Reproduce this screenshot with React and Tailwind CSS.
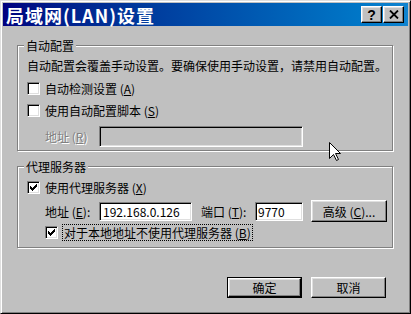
import React from "react";

function Check({ checked }) {
  return (
    <span className="w-[13px] h-[13px] shrink-0 bg-white border border-t-[#808080] border-l-[#808080] border-r-white border-b-white shadow-[inset_1px_1px_0_#000,inset_-1px_-1px_0_#dfdfdf] flex items-center justify-center">
      {checked && (
        <svg width="7" height="7" viewBox="0 0 7 7" shapeRendering="crispEdges">
          <path
            d="M0 2h1v3h-1z M1 3h1v3h-1z M2 4h1v3h-1z M3 3h1v3h-1z M4 2h1v3h-1z M5 1h1v3h-1z M6 0h1v3h-1z"
            fill="#000"
          />
        </svg>
      )}
    </span>
  );
}

function Group({ title, children, className }) {
  return (
    <div
      className={
        "relative w-[376px] border border-[#808080] shadow-[1px_1px_0_#fff,inset_1px_1px_0_#fff] pl-[9px] " +
        className
      }
    >
      <span className="absolute left-[6px] top-[-7px] px-[2px] bg-[#c0c0c0]">{title}</span>
      {children}
    </div>
  );
}

const raised =
  "bg-[#c0c0c0] border border-t-white border-l-white border-r-black border-b-black shadow-[inset_-1px_-1px_0_#808080,inset_1px_1px_0_#dfdfdf]";
const sunken =
  "border border-t-[#808080] border-l-[#808080] border-r-white border-b-white shadow-[inset_1px_1px_0_#000,inset_-1px_-1px_0_#dfdfdf]";

export default function App() {
  return (
    <div className="relative w-[411px] h-[314px] bg-[#c0c0c0] border border-t-[#dfdfdf] border-l-[#dfdfdf] border-r-black border-b-black shadow-[inset_1px_1px_0_#fff,inset_-1px_-1px_0_#808080] p-[2px] flex flex-col font-['Noto_Sans_CJK_SC',sans-serif] text-[12px] leading-[13px] text-black">
      {/* title bar */}
      <div className="h-[23px] shrink-0 flex items-center justify-between bg-linear-to-r from-[#000080] to-[#1084d0] pl-[3px] pr-[4px]">
        <span className="text-white font-bold text-[18px] leading-[20px] tracking-[1px]">局域网(LAN)设置</span>
        <div className="flex gap-[1px]">
          <div className={"w-[21px] h-[17px] flex items-center justify-center " + raised}>
            <span className="font-['Liberation_Sans',sans-serif] font-bold text-[14px] leading-[14px]">?</span>
          </div>
          <div className={"w-[21px] h-[17px] flex items-center justify-center " + raised}>
            <svg width="10" height="9" viewBox="0 0 10 9">
              <path d="M1 0.5 L9 8.5 M9 0.5 L1 8.5" stroke="#000" strokeWidth="1.8" />
            </svg>
          </div>
        </div>
      </div>

      <div className="ml-[14px] mt-[19px] flex flex-col">
        <Group title="自动配置" className="pt-[13px] pb-[3px]">
          <div className="h-[13px] whitespace-nowrap">
            自动配置会覆盖手动设置。要确保使用手动设置，请禁用自动配置。
          </div>
          <div className="mt-[10px] h-[13px] flex items-center">
            <Check />
            <span className="ml-[5px]">
              自动检测设置 (<u>A</u>)
            </span>
          </div>
          <div className="mt-[9px] h-[13px] flex items-center">
            <Check />
            <span className="ml-[5px]">
              使用自动配置脚本 (<u>S</u>)
            </span>
          </div>
          <div className="mt-[9px] h-[21px] flex items-center pl-[18px]">
            <span className="w-[54px] text-[#808080] [text-shadow:1px_1px_0_#fff]">
              地址 (<u>R</u>)
            </span>
            <div className={"w-[204px] h-[21px] bg-[#c0c0c0] " + sunken} />
          </div>
        </Group>

        <Group title="代理服务器" className="mt-[15px] pt-[14px] pb-[6px]">
          <div className="h-[13px] flex items-center">
            <Check checked />
            <span className="ml-[5px]">
              使用代理服务器 (<u>X</u>)
            </span>
          </div>
          <div className="mt-[6px] h-[22px] flex items-center pl-[18px]">
            <span className="w-[54px]">
              地址 (<u>E</u>):
            </span>
            <div className={"w-[93px] h-[19px] bg-white flex items-center pl-[3px] " + sunken}>
              192.168.0.126
            </div>
            <span className="ml-[9px] w-[54px]">
              端口 (<u>T</u>):
            </span>
            <div className={"w-[48px] h-[19px] bg-white flex items-center pl-[2px] " + sunken}>9770</div>
            <div className={"ml-[8px] w-[76px] h-[22px] flex items-center justify-center " + raised}>
              高级 (<u>C</u>)...
            </div>
          </div>
          <div className="mt-[2px] h-[17px] flex items-center pl-[18px]">
            <Check checked />
            <span className="ml-[4px] h-[17px] px-[1px] flex items-center border border-dotted border-black">
              对于本地地址不使用代理服务器 (<u>B</u>)
            </span>
          </div>
        </Group>
      </div>

      <div className="mt-[29px] flex justify-end gap-[9px] pr-[22px]">
        <div className="w-[75px] h-[21px] border border-black">
          <div className={"w-full h-full flex items-center justify-center " + raised}>确定</div>
        </div>
        <div className={"w-[75px] h-[21px] flex items-center justify-center " + raised}>取消</div>
      </div>

      {/* mouse pointer */}
      <svg className="absolute left-[328px] top-[141px]" width="13" height="20" viewBox="0 0 13 20">
        <path
          d="M0.5 0.5 L0.5 16.5 L4.5 12.5 L7.5 18.5 L9.5 17.5 L6.5 11.5 L11.5 11.5 Z"
          fill="#fff"
          stroke="#000"
          strokeWidth="1"
        />
      </svg>
    </div>
  );
}
